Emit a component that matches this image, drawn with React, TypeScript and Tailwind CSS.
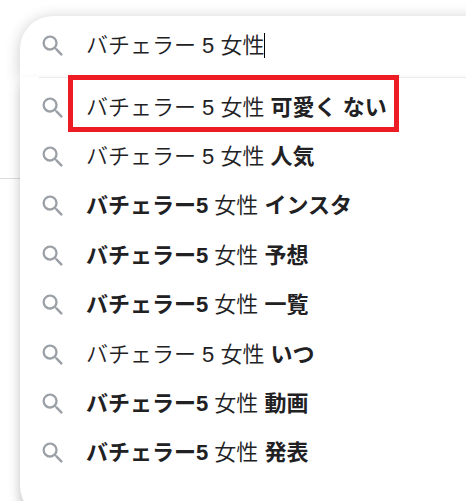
import React from 'react';

interface TextPart {
  text: string;
  bold?: boolean;
}

const SUGGESTIONS: TextPart[][] = [
  [{ text: 'バチェラー 5 女性 ' }, { text: '可愛く ない', bold: true }],
  [{ text: 'バチェラー 5 女性 ' }, { text: '人気', bold: true }],
  [{ text: 'バチェラー5', bold: true }, { text: ' 女性 ' }, { text: 'インスタ', bold: true }],
  [{ text: 'バチェラー5', bold: true }, { text: ' 女性 ' }, { text: '予想', bold: true }],
  [{ text: 'バチェラー5', bold: true }, { text: ' 女性 ' }, { text: '一覧', bold: true }],
  [{ text: 'バチェラー 5 女性 ' }, { text: 'いつ', bold: true }],
  [{ text: 'バチェラー5', bold: true }, { text: ' 女性 ' }, { text: '動画', bold: true }],
  [{ text: 'バチェラー5', bold: true }, { text: ' 女性 ' }, { text: '発表', bold: true }],
];

const SearchIcon: React.FC = () => (
  <svg viewBox="0 0 24 24" className="h-7 w-7 shrink-0 fill-[#9aa0a6]">
    <path d="M15.5 14h-.79l-.28-.27A6.471 6.471 0 0 0 16 9.5 6.5 6.5 0 1 0 9.5 16c1.61 0 3.09-.59 4.23-1.57l.27.28v.79l5 4.99L20.49 19l-4.99-5zm-6 0C7.01 14 5 11.99 5 9.5S7.01 5 9.5 5 14 7.01 14 9.5 11.99 14 9.5 14z" />
  </svg>
);

const SuggestionRow: React.FC<{ parts: TextPart[] }> = ({ parts }) => (
  <li className="flex h-[49.4px] items-center gap-[19.5px] pl-[18.5px]">
    <SearchIcon />
    <span className="whitespace-pre">
      {parts.map((part, i) => (
        <span key={i} className={part.bold ? 'font-bold' : 'font-[350]'}>{part.text}</span>
      ))}
    </span>
  </li>
);

const App: React.FC = () => {
  return (
    <div className="relative h-[501px] w-full overflow-hidden bg-white pt-4 pl-5 font-['Liberation_Sans','Noto_Sans_CJK_JP',sans-serif] text-[22px] leading-[30px] text-[#212124]">
      {/* page rule running behind the panel */}
      <div className="absolute top-[178px] left-0 h-px w-full bg-[#dadce0]" />

      <div className="relative w-[520px]">
        <div className="flex h-[61px] items-center gap-[19.5px] rounded-t-[33px] bg-white pb-[2px] pl-[18.5px] shadow-[0_2px_14px_1px_rgba(64,60,67,0.24)]">
          <SearchIcon />
          <div className="flex items-center">
            <span className="font-[350] whitespace-pre">バチェラー 5 女性</span>
            <span className="-ml-[0.5px] h-[25px] w-px bg-black" />
          </div>
        </div>
        <div className="h-[442px] rounded-b-[33px] bg-white shadow-[0_8px_12px_rgba(32,33,36,0.28)]">
          <div className="ml-[19px] h-px bg-[#e8eaed]" />
          <ul className="pt-[5px]">
            {SUGGESTIONS.map((parts, i) => (
              <SuggestionRow key={i} parts={parts} />
            ))}
          </ul>
        </div>
      </div>

      {/* highlight around the first suggestion */}
      <div className="absolute top-[75px] left-[68px] h-[57px] w-[331px] border-5 border-[#ed1c24]" />
    </div>
  );
};

export default App;
